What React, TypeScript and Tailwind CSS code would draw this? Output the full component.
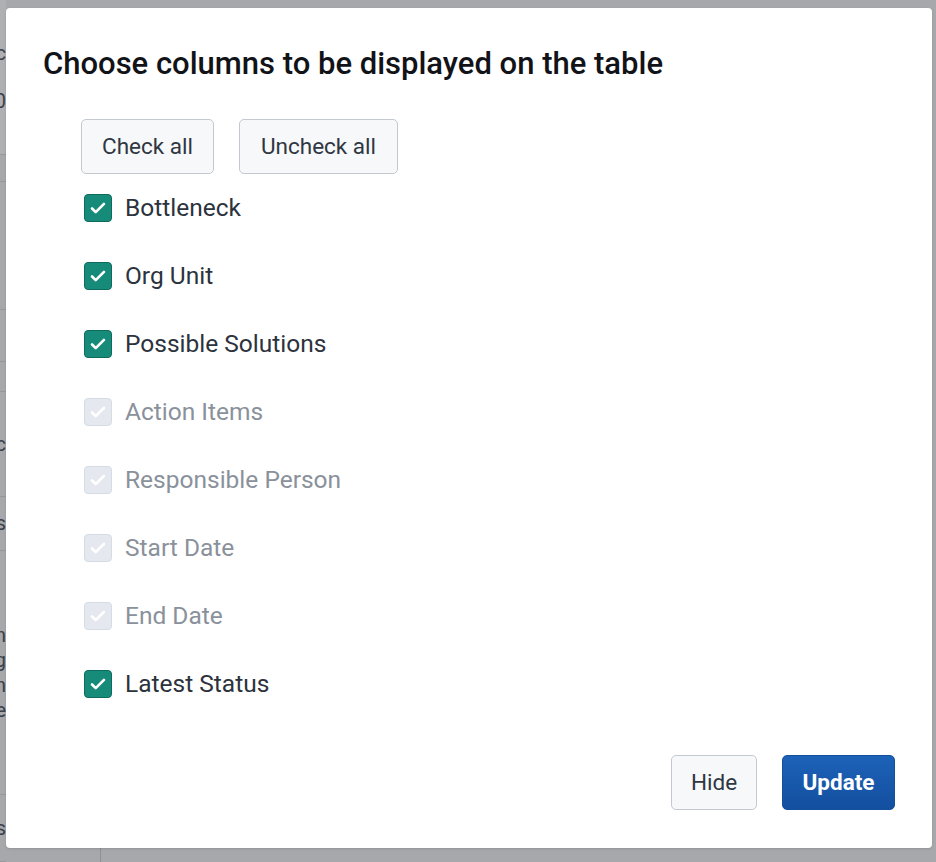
import React from "react";

const columns = [
  { label: "Bottleneck", checked: true, disabled: false },
  { label: "Org Unit", checked: true, disabled: false },
  { label: "Possible Solutions", checked: true, disabled: false },
  { label: "Action Items", checked: true, disabled: true },
  { label: "Responsible Person", checked: true, disabled: true },
  { label: "Start Date", checked: true, disabled: true },
  { label: "End Date", checked: true, disabled: true },
  { label: "Latest Status", checked: true, disabled: false },
];

// dimmed page behind the dialog: only a sliver on the left shows
const bgRows = [
  { h: "h-[155px] gap-[23px]", text: "Dc\nA0", tone: "bg-[#aeb0b4]" },
  { h: "h-[27px]", text: "", tone: "" },
  { h: "h-[128px]", text: "", tone: "" },
  { h: "h-[52px]", text: "", tone: "" },
  { h: "h-[30px]", text: "", tone: "" },
  { h: "h-[105px]", text: "Ac", tone: "" },
  { h: "h-[54px]", text: "Ss", tone: "" },
  { h: "h-[244px]", text: "In\nAg\nIn\nAe", tone: "" },
  { h: "h-[67px]", text: "Ss", tone: "" },
];

const Check = ({ checked, disabled }: { checked: boolean; disabled: boolean }) => (
  <span
    className={
      "flex h-[28px] w-[28px] shrink-0 items-center justify-center rounded-[4px] border " +
      (disabled
        ? "border-[#d6dce4] bg-[#e5e9ef]"
        : "border-[#0f6b5e] bg-[#178b79]")
    }
  >
    {checked && (
      <svg viewBox="0 0 24 24" className="h-[22px] w-[22px]" fill="none">
        <path
          d="M5.5 12.5l4 4L18.5 7.5"
          stroke="white"
          strokeWidth="2.9"
          strokeLinecap="round"
          strokeLinejoin="round"
        />
      </svg>
    )}
  </span>
);

export default function App() {
  return (
    <div className="relative h-[862px] w-[936px] overflow-hidden bg-[#a6a8ac] font-['Roboto',sans-serif]">
      {/* page behind the overlay */}
      <div className="flex w-[6px] flex-col">
        {bgRows.map((r, i) => (
          <div
            key={i}
            className={
              "flex flex-col items-end justify-center overflow-hidden border-b border-[#96989c] text-[20px] leading-[25px] text-[#3b3f47] " +
              r.h +
              " " +
              r.tone
            }
          >
            {r.text.split("\n").map((t, j) =>
              t ? (
                <span key={j} className="whitespace-nowrap">
                  {t}
                </span>
              ) : null
            )}
          </div>
        ))}
      </div>
      <div className="absolute bottom-0 left-[100px] h-[14px] w-px bg-[#8f9195]" />

      {/* dialog */}
      <div className="absolute left-[6px] top-[8px] flex h-[840px] w-[926px] flex-col rounded-[4px] bg-white px-[37px] pt-[40px] pb-[38px] shadow-sm">
        <h2 className="text-[31px] font-medium leading-[32px] text-[#111318]">
          Choose columns to be displayed on the table
        </h2>

        <div className="ml-[38px] mt-[39px] flex flex-col">
          <div className="flex gap-[25px]">
            <button className="h-[55px] w-[133px] rounded-[5px] border border-[#c3c8d1] bg-[#f7f8fa] text-[22.5px] text-[#2f3742]">
              Check all
            </button>
            <button className="h-[55px] w-[159px] rounded-[5px] border border-[#c3c8d1] bg-[#f7f8fa] text-[22.5px] text-[#2f3742]">
              Uncheck all
            </button>
          </div>

          <div className="flex flex-col">
            {columns.map((c) => (
              <label
                key={c.label}
                className="ml-[3px] flex h-[68px] items-center gap-[13px]"
              >
                <Check checked={c.checked} disabled={c.disabled} />
                <span
                  className={
                    "text-[24.5px] " +
                    (c.disabled ? "text-[#8a919b]" : "text-[#2c333d]")
                  }
                >
                  {c.label}
                </span>
              </label>
            ))}
          </div>
        </div>

        <div className="mt-auto flex justify-end gap-[25px]">
          <button className="h-[55px] w-[86px] rounded-[5px] border border-[#c3c8d1] bg-[#f7f8fa] text-[22.5px] text-[#2f3742]">
            Hide
          </button>
          <button className="h-[55px] w-[113px] rounded-[5px] border border-[#144f9c] bg-gradient-to-b from-[#1c62b8] to-[#144f9f] text-[22.5px] font-bold text-white">
            Update
          </button>
        </div>
      </div>
    </div>
  );
}
